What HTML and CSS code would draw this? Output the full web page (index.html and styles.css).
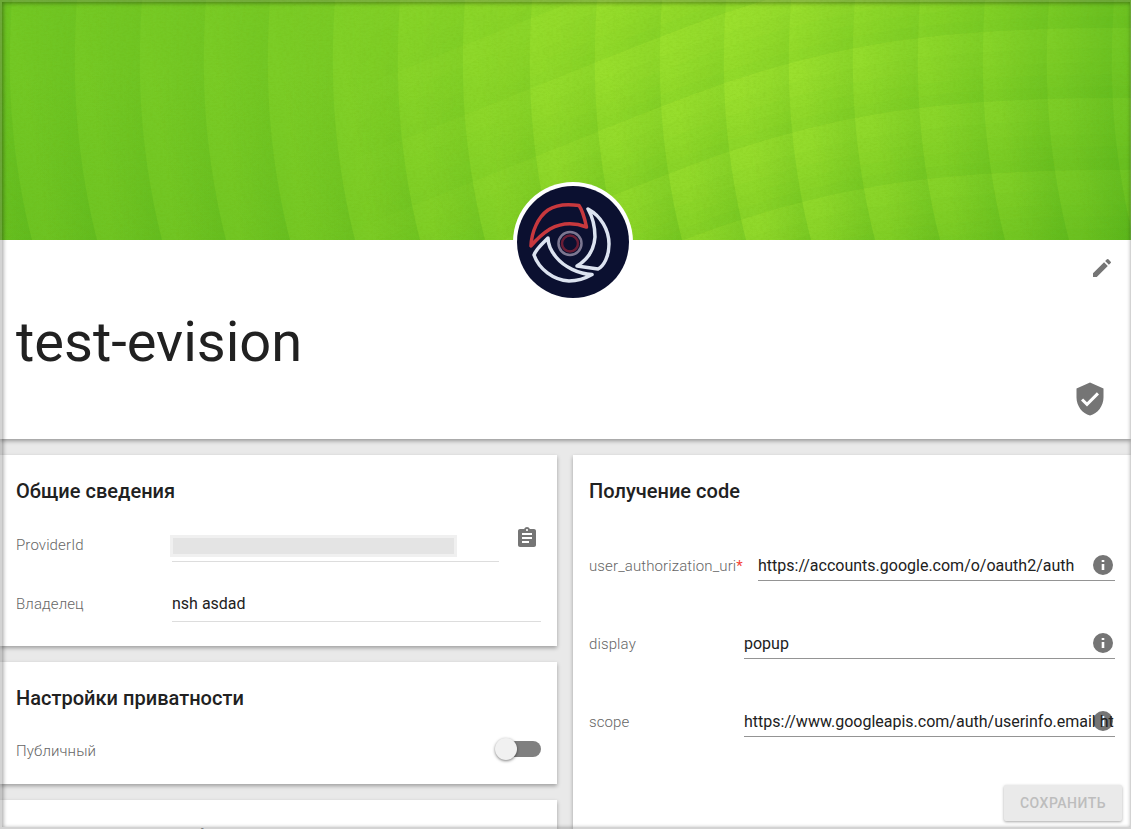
FILE: index.html
```
<!DOCTYPE html>
<html lang="ru">
<head>
<meta charset="utf-8">
<title>test-evision</title>
<link rel="stylesheet" href="styles.css">
</head>
<body>
<main class="page">
  <section class="profile">
    <div class="cover">
      <svg class="cover-art" width="1131" height="240" viewBox="0 0 1131 240">
        <defs>
          <linearGradient id="base" x1="0" x2="1">
            <stop offset="0" stop-color="#73c825"/><stop offset=".25" stop-color="#7ccd27"/>
            <stop offset=".5" stop-color="#98de2d"/><stop offset=".68" stop-color="#9de12f"/>
            <stop offset=".87" stop-color="#88d52a"/><stop offset="1" stop-color="#72c625"/>
          </linearGradient>
          <linearGradient id="low" x1="0" x2="0" y1="0" y2="1">
            <stop offset=".3" stop-color="#3f9f12" stop-opacity="0"/><stop offset="1" stop-color="#3f9f12" stop-opacity=".14"/>
          </linearGradient>
          <linearGradient id="scale" gradientUnits="userSpaceOnUse" x1="0" y1="0" x2="74" y2="-12">
            <stop offset="0" stop-color="#2f9610" stop-opacity="0"/><stop offset="1" stop-color="#2f9610" stop-opacity=".29"/>
          </linearGradient>
          <linearGradient id="fade"><stop offset=".3" stop-color="#000"/><stop offset=".58" stop-color="#fff"/></linearGradient>
          <linearGradient id="fadeY" x1="0" x2="0" y1="0" y2="1"><stop offset="0" stop-color="#555"/><stop offset="1" stop-color="#fff"/></linearGradient>
          <mask id="rowMask" maskUnits="userSpaceOnUse" x="0" y="0" width="1131" height="240"><rect width="1131" height="240" fill="url(#fade)"/></mask>
          <mask id="colMask" maskUnits="userSpaceOnUse" x="0" y="0" width="1131" height="240"><rect width="1131" height="240" fill="url(#fadeY)"/></mask>
          <filter id="grain" x="0" y="0" width="100%" height="100%">
            <feTurbulence type="fractalNoise" baseFrequency=".3 .55" numOctaves="2" seed="4"/>
            <feColorMatrix values="0 0 0 0 .15  0 0 0 0 .4  0 0 0 0 0  1.4 0 0 0 -.55"/>
          </filter>
          <path id="band" d="M2 0C-2 60-3 140 22 240H87C62 140 63 60 67 0Z" fill="url(#scale)"/>
          <g id="fold" fill="#3da010" fill-opacity=".02">
            <path d="M330 239C520 164 640 113 725 83C850 42 940 28 1131 28V16C940 16 850 30 725 71C640 101 520 152 330 227Z"/>
            <path d="M330 239C520 164 640 113 725 83C850 42 940 28 1131 28V4C940 4 850 18 725 59C640 89 520 140 330 215Z"/>
            <path d="M330 239C520 164 640 113 725 83C850 42 940 28 1131 28V-8C940-8 850 6 725 47C640 77 520 128 330 203Z"/>
            <path d="M330 239C520 164 640 113 725 83C850 42 940 28 1131 28V-22C940-22 850-8 725 33C640 63 520 114 330 189Z"/>
          </g>
        </defs>
        <rect width="1131" height="240" fill="url(#base)"/>
        <rect width="1131" height="240" fill="url(#low)"/>
        <g mask="url(#colMask)">
          <use href="#band" x="-55"/><use href="#band" x="10"/><use href="#band" x="75"/><use href="#band" x="139"/>
          <use href="#band" x="203"/><use href="#band" x="268"/><use href="#band" x="333"/><use href="#band" x="398"/>
          <use href="#band" x="465"/><use href="#band" x="530"/><use href="#band" x="595"/><use href="#band" x="659"/>
          <use href="#band" x="724"/><use href="#band" x="788"/><use href="#band" x="853"/><use href="#band" x="918"/>
          <use href="#band" x="982"/><use href="#band" x="1047"/><use href="#band" x="1112"/>
        </g>
        <g mask="url(#rowMask)">
          <use href="#fold" y="-140"/><use href="#fold" y="-70"/><use href="#fold"/><use href="#fold" y="70"/><use href="#fold" y="142"/><use href="#fold" y="212"/>
        </g>
        <rect width="1131" height="240" filter="url(#grain)" opacity=".2"/>
      </svg>
    </div>
    <div class="avatar">
      <svg width="112" height="112" viewBox="0 0 112 112">
        <defs><filter id="soft"><feGaussianBlur stdDeviation=".7"/></filter></defs>
        <circle cx="56" cy="56" r="56" fill="#0b1030"/>
        <g fill="none" stroke-width="3.500" stroke-linejoin="round" filter="url(#soft)">
          <path d="M14 60C14.500 46 21 31 31 24C40 18 52 18 62 19.500C66 25 68 34 69.500 41C54 35 42 38 33 43C25 48 19 54 14 60Z" stroke="#c8393e"/>
          <path d="M71 23C84 30 92 44 92 58C92 70 87 80 81 83L60 80C70 74 77 65 78 51C78 41 75 30 71 23Z" stroke="#dce3f0"/>
          <path d="M31 52C25 58 19 63 17 69C22 83 36 94 52 95C62 95 69 92 75 88.500C62 88 47 81 39 71C34 65 31 59 31 52Z" stroke="#dce3f0"/>
          <circle cx="53" cy="57.500" r="11.500" stroke="#7c7791" stroke-width="2.500"/>
          <circle cx="53" cy="57.500" r="8" stroke="#6a1d36" stroke-width="2.500"/>
        </g>
      </svg>
    </div>
    <div class="profile-body">
      <svg class="icon edit" viewBox="0 0 24 24"><path d="M3 17.250V21h3.750L17.810 9.940l-3.750-3.750L3 17.250zM20.710 7.040a1 1 0 0 0 0-1.410l-2.340-2.340a1 1 0 0 0-1.410 0l-1.830 1.830 3.750 3.750 1.830-1.830z"/></svg>
      <h1 class="title">test-evision</h1>
      <svg class="icon verified" viewBox="0 0 24 24"><path d="M12 1L3 5v6c0 5.550 3.840 10.740 9 12 5.160-1.260 9-6.450 9-12V5l-9-4zm-2 16l-4-4 1.410-1.410L10 14.170l6.590-6.590L18 9l-8 8z"/></svg>
    </div>
  </section>

  <div class="columns">
    <div class="column">
      <section class="card general">
        <h2 class="card-title">Общие сведения</h2>
        <div class="row provider">
          <span class="label">ProviderId</span>
          <span class="value light short"><span class="redacted"></span></span>
          <svg class="icon copy" viewBox="0 0 24 24"><path d="M19 3h-4.180C14.400 1.840 13.300 1 12 1s-2.400.840-2.820 2H5c-1.100 0-2 .9-2 2v14c0 1.100.9 2 2 2h14c1.100 0 2-.9 2-2V5c0-1.100-.9-2-2-2zm-7 0c.550 0 1 .450 1 1s-.450 1-1 1-1-.450-1-1 .450-1 1-1zm2 14H7v-2h7v2zm3-4H7v-2h10v2zm0-4H7V7h10v2z"/></svg>
        </div>
        <div class="row owner">
          <span class="label">Владелец</span>
          <span class="value light">nsh asdad</span>
        </div>
      </section>
      <section class="card privacy">
        <h2 class="card-title">Настройки приватности</h2>
        <div class="row">
          <span class="label">Публичный</span>
          <span class="switch"><span class="thumb"></span></span>
        </div>
      </section>
      <section class="card next">
        <h2 class="card-title">Прямой вход в профиль</h2>
      </section>
    </div>

    <section class="card code">
      <h2 class="card-title">Получение code</h2>
      <div class="field">
        <span class="label wide">user_authorization_uri<span class="required">*</span></span>
        <span class="value">https://accounts.google.com/o/oauth2/auth</span>
        <svg class="icon info" viewBox="0 0 24 24"><path d="M12 2a10 10 0 1 0 0 20 10 10 0 0 0 0-20zm1.300 15h-2.600v-6h2.600v6zm0-8h-2.600V7h2.600v2z"/></svg>
      </div>
      <div class="field">
        <span class="label">display</span>
        <span class="value">popup</span>
        <svg class="icon info" viewBox="0 0 24 24"><path d="M12 2a10 10 0 1 0 0 20 10 10 0 0 0 0-20zm1.300 15h-2.600v-6h2.600v6zm0-8h-2.600V7h2.600v2z"/></svg>
      </div>
      <div class="field">
        <span class="label">scope</span>
        <span class="value">https://www.googleapis.com/auth/userinfo.email ht</span>
        <svg class="icon info" viewBox="0 0 24 24"><path d="M12 2a10 10 0 1 0 0 20 10 10 0 0 0 0-20zm1.300 15h-2.600v-6h2.600v6zm0-8h-2.600V7h2.600v2z"/></svg>
      </div>
      <button class="save" disabled>СОХРАНИТЬ</button>
    </section>
  </div>
  <div class="frame"></div>
</main>
</body>
</html>
```

FILE: styles.css
```
* { box-sizing: border-box; }
body { margin: 0; background: #e9e9e9; font-family: Roboto, "Noto Sans", sans-serif; color: #212121; }
.page { position: relative; width: 1131px; height: 829px; overflow: hidden; background: #e9e9e9; }

.profile { position: relative; height: 439px; background: #fff; box-shadow: 0 2px 4px rgba(0,0,0,.35); }
.cover { height: 240px; overflow: hidden; }
.cover-art { display: block; }
.avatar { position: absolute; left: 513px; top: 182px; width: 120px; height: 120px; padding: 4px; border-radius: 50%; background: #fff; }
.avatar svg { display: block; }
.profile-body { display: flex; flex-direction: column; padding: 16px 17px 0 16px; }
.icon { display: block; flex: none; fill: #757575; }
.edit { width: 24px; height: 24px; align-self: flex-end; }
.title { margin: 30px 0 0; height: 64px; font-size: 56px; line-height: 64px; font-weight: 400; }
.verified { width: 36px; height: 36px; align-self: flex-end; margin: 7px 6px 0 0; }

.columns { display: grid; grid-template-columns: 557px 558px; gap: 16px; margin-top: 16px; }
.column { display: flex; flex-direction: column; gap: 16px; }
.card { background: #fff; padding: 24px 16px 0; box-shadow: 0 2px 4px rgba(0,0,0,.32); }
.card-title { margin: 0; font-size: 20px; line-height: 24px; font-weight: 500; white-space: nowrap; letter-spacing: .02px; }
.general { height: 191px; }
.privacy { height: 122px; }
.next { height: 120px; }
.next .card-title { transform: translateY(.6px); }
.code { height: 400px; display: flex; flex-direction: column; }

.row { display: flex; align-items: center; }
.label { width: 155px; flex: none; font-size: 15px; line-height: 20px; font-weight: 300; letter-spacing: .12px; color: #666; }
.value { flex: 1; height: 35px; padding-top: 8px; font-size: 16px; line-height: 24px; border-bottom: 1px solid #949494; white-space: nowrap; overflow: hidden; }
.value.light { margin-left: 1px; border-color: #ddd; }
.general .row { align-items: flex-start; margin-top: 25px; height: 35px; }
.general .row .label { margin-top: 8px; }
.general .owner .label { margin-top: 7px; }
.general .owner .value { padding-top: 5px; }
.general .provider { margin-top: 24px; }
.short { flex: 0 0 327px; overflow: visible; }
.redacted { display: block; width: 287px; height: 22px; margin-left: -2px; background: #e4e4e4; border: 3px solid #f0f0f0; }
.copy { width: 24px; height: 24px; margin: -1px 0 0 16px; }

.privacy .row { justify-content: space-between; margin-top: 27px; height: 24px; }
.privacy .label { padding-top: 4px; line-height: 20px; }
.switch { position: relative; width: 41px; height: 16px; border-radius: 8px; background: #808080; }
.thumb { position: absolute; left: -5px; top: -3px; width: 22px; height: 22px; border-radius: 50%; background: #f1f1f1; box-shadow: 0 1px 3px rgba(0,0,0,.5); }

.field { position: relative; display: flex; height: 35px; margin-top: 43px; }
.field .label { margin-top: 10px; }
.field .label.wide { width: 169px; }
.required { color: #f44336; font-weight: 400; }
.info { position: absolute; right: 0; top: 7px; width: 24px; height: 24px; }
.field .value { position: relative; z-index: 1; }
.save { align-self: flex-end; width: 118px; height: 36px; margin: 48px -7px 0 0; padding: 0; border: 0; border-radius: 2px; background: #eaeaea; box-shadow: 0 1px 3px rgba(0,0,0,.35); color: #bdbdbd; font: 500 14px/34px Roboto, sans-serif; letter-spacing: .5px; }

.frame { position: absolute; inset: 0; z-index: 5; pointer-events: none; border: solid rgba(110,110,110,.3); border-width: 2px 1px 2px 2px; box-shadow: inset 1px 1px 4px rgba(0,0,0,.4); }
```
